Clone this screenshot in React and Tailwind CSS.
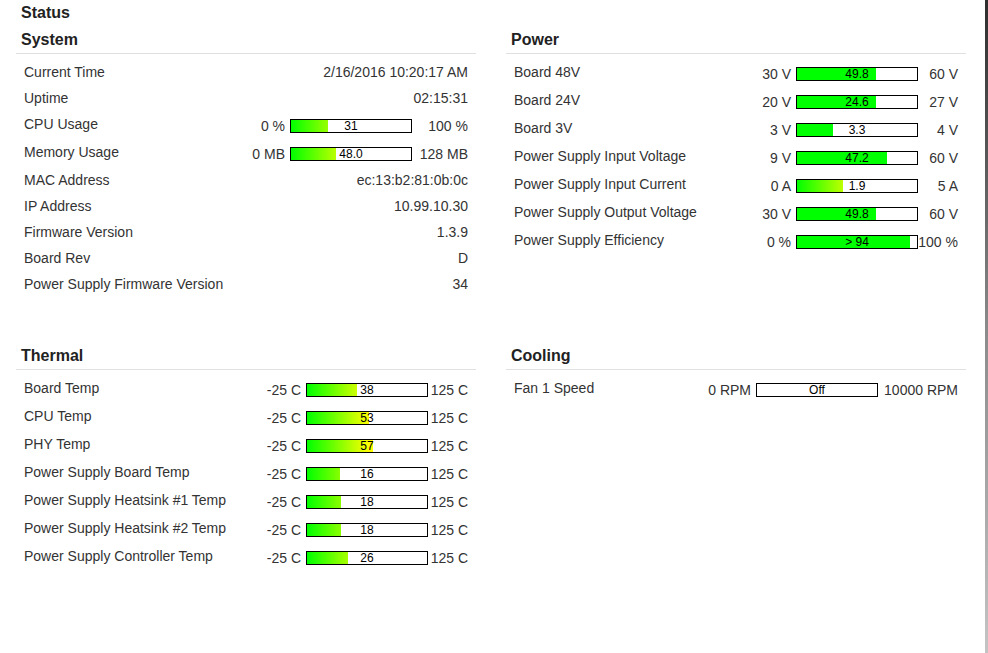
import React from "react";

const GRAD = "linear-gradient(to right, #00ff00 0px, #ffff00 62px, #ffff00 80px, #ff0000 120px)";

function Bar({ pct, text, grad }) {
  const w = Math.max(0, Math.min(100, pct)) * 1.2;
  return (
    <div className="grid h-[14px] w-[122px] border border-black bg-white">
      <div
        className="col-start-1 row-start-1 h-full justify-self-start"
        style={{ width: w + "px", background: grad ? GRAD : "#00ff00" }}
      />
      <div className="col-start-1 row-start-1 text-center text-[12px] leading-[12px] text-black">
        {text}
      </div>
    </div>
  );
}

function Row({ r, maxW }) {
  if (r.value !== undefined) {
    return (
      <div className="flex h-[26px] px-[8px]">
        <div className="flex-1 pt-[5px] leading-[16px]">{r.label}</div>
        <div className="pt-[5px] leading-[16px]">{r.value}</div>
      </div>
    );
  }
  return (
    <div className="flex h-[28px] px-[8px]">
      <div className="flex-1 pt-[5px] leading-[16px]">{r.label}</div>
      <div className="mt-[8px] flex h-[14px] items-center">
        <div className="pr-[5px] leading-[16px]">{r.min}</div>
        <Bar pct={r.pct} text={r.text} grad={r.grad} />
        <div className="text-right leading-[16px]" style={{ width: maxW + "px" }}>
          {r.max}
        </div>
      </div>
    </div>
  );
}

function Section({ title, rows, maxW, className = "" }) {
  return (
    <div className={className}>
      <div className="border-b border-[#e0e0e0] pb-[3px] pl-[5px] pt-[1px] text-[16px] font-bold leading-[20px] text-[#222]">
        {title}
      </div>
      <div className="pt-[5px]">
        {rows.map((r, i) => (
          <Row key={i} r={r} maxW={maxW} />
        ))}
      </div>
    </div>
  );
}

const system = [
  { label: "Current Time", value: "2/16/2016 10:20:17 AM" },
  { label: "Uptime", value: "02:15:31" },
  { label: "CPU Usage", min: "0 %", max: "100 %", text: "31", pct: 31, grad: true },
  { label: "Memory Usage", min: "0 MB", max: "128 MB", text: "48.0", pct: 37.5, grad: true },
  { label: "MAC Address", value: "ec:13:b2:81:0b:0c" },
  { label: "IP Address", value: "10.99.10.30" },
  { label: "Firmware Version", value: "1.3.9" },
  { label: "Board Rev", value: "D" },
  { label: "Power Supply Firmware Version", value: "34" },
];

const power = [
  { label: "Board 48V", min: "30 V", max: "60 V", text: "49.8", pct: 66 },
  { label: "Board 24V", min: "20 V", max: "27 V", text: "24.6", pct: 65.7 },
  { label: "Board 3V", min: "3 V", max: "4 V", text: "3.3", pct: 30 },
  { label: "Power Supply Input Voltage", min: "9 V", max: "60 V", text: "47.2", pct: 74.9 },
  { label: "Power Supply Input Current", min: "0 A", max: "5 A", text: "1.9", pct: 38, grad: true },
  { label: "Power Supply Output Voltage", min: "30 V", max: "60 V", text: "49.8", pct: 66 },
  { label: "Power Supply Efficiency", min: "0 %", max: "100 %", text: "> 94", pct: 94 },
];

const t = (v) => ((v + 25) / 150) * 100;
const thermal = [
  ["Board Temp", 38],
  ["CPU Temp", 53],
  ["PHY Temp", 57],
  ["Power Supply Board Temp", 16],
  ["Power Supply Heatsink #1 Temp", 18],
  ["Power Supply Heatsink #2 Temp", 18],
  ["Power Supply Controller Temp", 26],
].map(([label, v]) => ({
  label,
  min: "-25 C",
  max: "125 C",
  text: String(v),
  pct: t(v),
  grad: true,
}));

const cooling = [
  { label: "Fan 1 Speed", min: "0 RPM", max: "10000 RPM", text: "Off", pct: 0 },
];

export default function App() {
  return (
    <div
      className="flex h-[653px] w-[988px] overflow-hidden bg-white text-[14px] text-[#333]"
      style={{ fontFamily: '"Liberation Sans", Arial, sans-serif' }}
    >
      <div className="flex-1 pl-[16px]">
        <div className="pl-[5px] pt-[3px] text-[16px] font-bold leading-[20px] text-[#222]">
          Status
        </div>
        <div className="mt-[6px] grid grid-cols-[460px_460px] gap-x-[30px]">
          <Section title="System" rows={system} maxW={56} />
          <Section title="Power" rows={power} maxW={40} />
          <Section title="Thermal" rows={thermal} maxW={40} className="mt-[48px]" />
          <Section title="Cooling" rows={cooling} maxW={80} className="mt-[48px]" />
        </div>
      </div>
      <div className="w-[3px] bg-gradient-to-b from-[#2e2e2e] via-[#8a8a8a] to-[#c4c4c4]" />
    </div>
  );
}
